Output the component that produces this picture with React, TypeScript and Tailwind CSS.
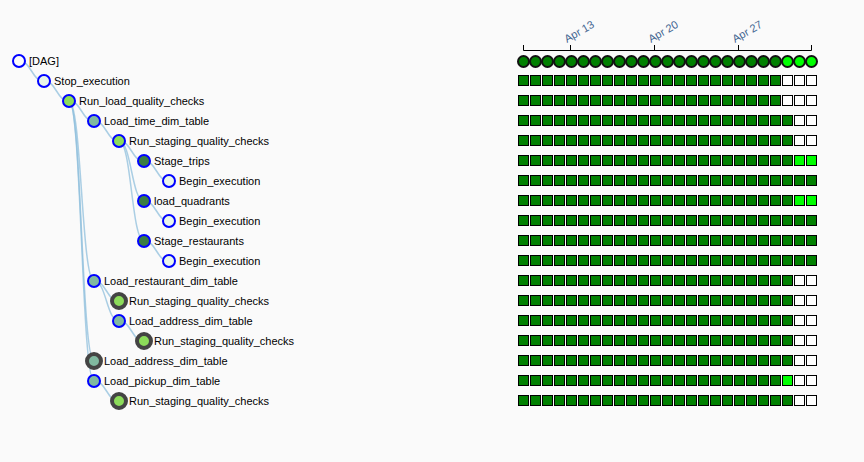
const ROW_H = 20;

type Node = {
  label: string;
  depth: number;
  parent: number;
  fill: string;
  busy?: boolean;
  lastCells: string; // states for the right end of the row, g = green, w = white, l = lime
};

const GREEN = "bg-[#008000]";
const LIME = "bg-[#00ff00]";
const WHITE = "bg-white";

const nodes: Node[] = [
  { label: "[DAG]", depth: 0, parent: -1, fill: "bg-[#fafafa]", lastCells: "lll" },
  { label: "Stop_execution", depth: 1, parent: 0, fill: "bg-[#e9f5e9]", lastCells: "www" },
  { label: "Run_load_quality_checks", depth: 2, parent: 1, fill: "bg-[#8cdc5a]", lastCells: "www" },
  { label: "Load_time_dim_table", depth: 3, parent: 2, fill: "bg-[#80b9a0]", lastCells: "gww" },
  { label: "Run_staging_quality_checks", depth: 4, parent: 3, fill: "bg-[#8cdc5a]", lastCells: "gww" },
  { label: "Stage_trips", depth: 5, parent: 4, fill: "bg-[#3a7d44]", lastCells: "gll" },
  { label: "Begin_execution", depth: 6, parent: 5, fill: "bg-[#e9f5e9]", lastCells: "ggg" },
  { label: "load_quadrants", depth: 5, parent: 4, fill: "bg-[#3a7d44]", lastCells: "gll" },
  { label: "Begin_execution", depth: 6, parent: 7, fill: "bg-[#e9f5e9]", lastCells: "ggg" },
  { label: "Stage_restaurants", depth: 5, parent: 4, fill: "bg-[#3a7d44]", lastCells: "ggg" },
  { label: "Begin_execution", depth: 6, parent: 9, fill: "bg-[#e9f5e9]", lastCells: "ggg" },
  { label: "Load_restaurant_dim_table", depth: 3, parent: 2, fill: "bg-[#80b9a0]", lastCells: "gww" },
  { label: "Run_staging_quality_checks", depth: 4, parent: 11, fill: "bg-[#8cdc5a]", busy: true, lastCells: "gww" },
  { label: "Load_address_dim_table", depth: 4, parent: 11, fill: "bg-[#80b9a0]", lastCells: "gww" },
  { label: "Run_staging_quality_checks", depth: 5, parent: 13, fill: "bg-[#8cdc5a]", busy: true, lastCells: "gww" },
  { label: "Load_address_dim_table", depth: 3, parent: 2, fill: "bg-[#80b9a0]", busy: true, lastCells: "gww" },
  { label: "Load_pickup_dim_table", depth: 3, parent: 2, fill: "bg-[#80b9a0]", lastCells: "lww" },
  { label: "Run_staging_quality_checks", depth: 4, parent: 16, fill: "bg-[#8cdc5a]", busy: true, lastCells: "gww" },
];

const nodeX = (depth: number) => 19 + depth * 25;
const nodeY = (i: number) => 10 + i * ROW_H;

function Links() {
  return (
    <svg className="absolute left-0 top-0 h-[360px] w-[518px]" fill="none">
      {nodes.map((n, i) => {
        if (n.parent < 0) return null;
        const x0 = nodeX(nodes[n.parent].depth);
        const y0 = nodeY(n.parent);
        const x1 = nodeX(n.depth);
        const y1 = nodeY(i);
        const mid = (x0 + x1) / 2;
        return (
          <path
            key={i}
            d={`M${x0},${y0} C${mid},${y0} ${mid},${y1} ${x1},${y1}`}
            stroke="#8fbfdc"
            strokeOpacity={0.75}
            strokeWidth={1.5}
          />
        );
      })}
    </svg>
  );
}

function TreeRow({ node }: { node: Node }) {
  return (
    <div className="relative flex h-5 items-center" style={{ paddingLeft: 12 + node.depth * 25 }}>
      <span className="flex size-[14px] shrink-0 items-center justify-center">
        {node.busy ? (
          <span className={`size-[18px] shrink-0 rounded-full border-4 border-[#444444] ${node.fill}`} />
        ) : (
          <span className={`size-[14px] shrink-0 rounded-full border-2 border-[#0000ff] ${node.fill}`} />
        )}
      </span>
      <span className="ml-[3px] text-[11px] text-black">{node.label}</span>
    </div>
  );
}

function Axis() {
  const ticks = [
    { x: 47, label: "Apr 13" },
    { x: 131, label: "Apr 20" },
    { x: 215, label: "Apr 27" },
  ];
  return (
    <svg className="ml-[523px] block h-[51px] w-[295px]">
      <path d="M0.5,45V50.5H288.5V45" fill="none" stroke="#000000" />
      {ticks.map((t) => (
        <g key={t.label}>
          <path d={`M${t.x + 0.5},45V50.5`} stroke="#000000" />
          <text
            transform={`translate(${t.x - 3},43) rotate(-30)`}
            className="text-[11px]"
            fill="#3f6490"
            fontFamily="'Liberation Sans', Arial, sans-serif"
          >
            {t.label}
          </text>
        </g>
      ))}
    </svg>
  );
}

function CellRow({ node, first }: { node: Node; first: boolean }) {
  const tail = node.lastCells.split("");
  const states = [...Array(22).fill("g"), ...tail];
  if (first) {
    return (
      <div className="-ml-px flex h-5 pt-1">
        {states.map((s, i) => (
          <span
            key={i}
            className={`-mr-px size-[13px] shrink-0 rounded-full border-2 border-[#111111] ${s === "l" ? LIME : GREEN}`}
          />
        ))}
      </div>
    );
  }
  return (
    <div className="flex h-5 gap-px pt-1">
      {states.map((s, i) => (
        <span
          key={i}
          className={`size-[11px] shrink-0 border border-black ${s === "l" ? LIME : s === "w" ? WHITE : GREEN}`}
        />
      ))}
    </div>
  );
}

export default function App() {
  return (
    <div className="h-[462px] w-[864px] overflow-hidden bg-[#fafafa] font-['Liberation_Sans',Arial,sans-serif]">
      <Axis />
      <div className="flex">
        <div className="relative w-[518px] shrink-0">
          <Links />
          {nodes.map((n, i) => (
            <TreeRow key={i} node={n} />
          ))}
        </div>
        <div>
          {nodes.map((n, i) => (
            <CellRow key={i} node={n} first={i === 0} />
          ))}
        </div>
      </div>
    </div>
  );
}
